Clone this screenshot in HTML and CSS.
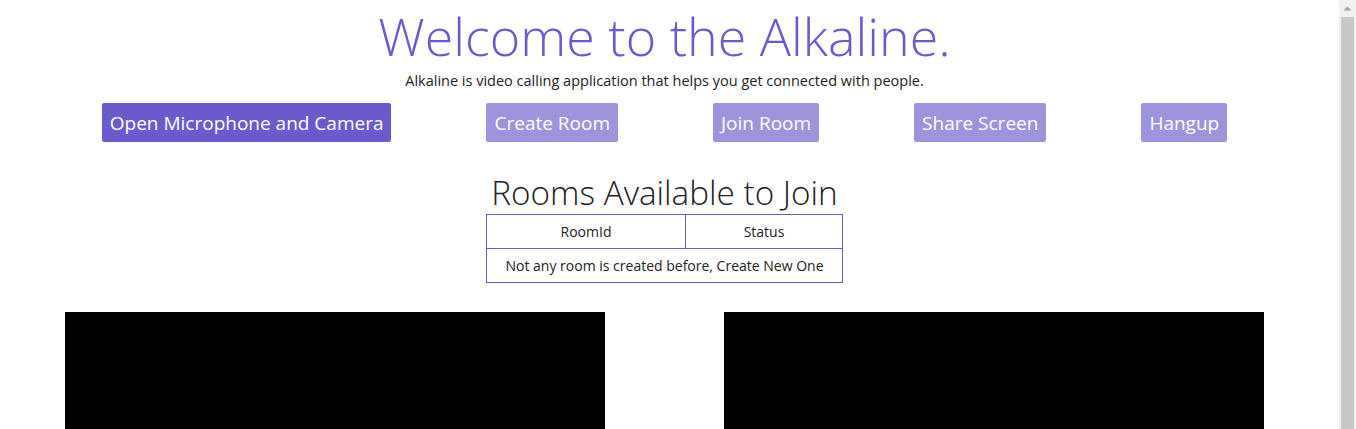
FILE: index.html
```html
<!DOCTYPE html>
<html lang="en">
<head>
<meta charset="utf-8">
<title>Alkaline</title>
<link rel="stylesheet" href="styles.css">
</head>
<body>
<div class="page">
  <h1 class="title">Welcome to the Alkaline.</h1>
  <p class="subtitle">Alkaline is video calling application that helps you get connected with people.</p>
  <div class="actions">
    <button class="btn">Open Microphone and Camera</button>
    <button class="btn btn-disabled">Create Room</button>
    <button class="btn btn-disabled">Join Room</button>
    <button class="btn btn-disabled">Share Screen</button>
    <button class="btn btn-disabled">Hangup</button>
  </div>
  <h2 class="rooms-title">Rooms Available to Join</h2>
  <table class="rooms">
    <thead>
      <tr><th class="col-id">RoomId</th><th class="col-status">Status</th></tr>
    </thead>
    <tbody>
      <tr><td colspan="2">Not any room is created before, Create New One</td></tr>
    </tbody>
  </table>
  <div class="videos">
    <div class="video"></div>
    <div class="video"></div>
  </div>
</div>
<div class="scrollbar" aria-hidden="true">
  <div class="scroll-up">
    <svg width="17" height="17" viewBox="0 0 17 17"><path d="M4.5 10.5 L8.5 6.5 L12.5 10.5 Z" fill="#a3a3a3"/></svg>
  </div>
  <div class="scroll-thumb"></div>
</div>
</body>
</html>
```
FILE: styles.css
```css
html, body {
  margin: 0;
  padding: 0;
  background: #ffffff;
}
body {
  font-family: "Open Sans", "Noto Sans", sans-serif;
  color: #222222;
}
.page {
  width: 1329px;
  display: flex;
  flex-direction: column;
  align-items: center;
}
.title {
  margin: 5px 0 0 0;
  font-weight: 300;
  font-size: 52px;
  line-height: 62px;
  color: #6a5acd;
}
.subtitle {
  margin: 4px 0 0 0;
  font-size: 14.5px;
  line-height: 20px;
}
.actions {
  margin-top: 12px;
  display: flex;
  gap: 95px;
  justify-content: center;
}
.btn {
  font-family: inherit;
  font-size: 19px;
  color: #ffffff;
  background: #6a5acd;
  border: none;
  border-radius: 2px;
  height: 39px;
  padding: 0 8px;
}
.btn-disabled {
  background: #9e94de;
}
.rooms-title {
  margin: 28px 0 0 0;
  font-weight: 300;
  font-size: 33.3px;
  line-height: 44px;
  color: #222222;
}
.rooms {
  margin-top: 0;
  border-collapse: collapse;
  border: 1px solid #6a5acd;
  font-size: 14px;
}
.rooms th, .rooms td {
  border: 1px solid #6a5acd;
  font-weight: 400;
  text-align: center;
  height: 33px;
  padding: 0 16px;
}
.col-id { width: 166px; }
.col-status { width: 124px; }
.videos {
  margin-top: 29px;
  display: flex;
  gap: 119px;
}
.video {
  width: 540px;
  height: 405px;
  background: #000000;
}
.scrollbar {
  position: fixed;
  top: 0;
  right: 0;
  width: 17px;
  height: 100%;
  background: #f1f1f1;
}
.scroll-up {
  height: 17px;
}
.scroll-up svg {
  display: block;
}
.scroll-thumb {
  margin: 0 2px;
  height: 420px;
  background: #c8c8c8;
}
```
